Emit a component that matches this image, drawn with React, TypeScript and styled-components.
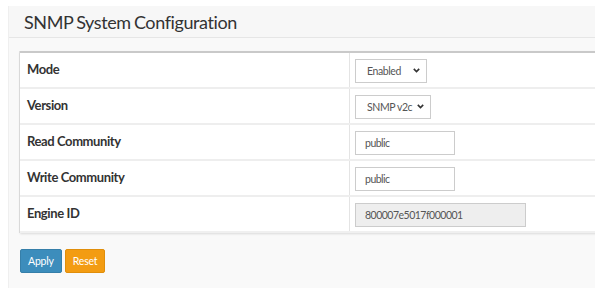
import React from "react";
import styled, { createGlobalStyle } from "styled-components";

const GlobalStyle = createGlobalStyle`
  html, body {
    margin: 0;
    padding: 0;
    background: #ffffff;
    font-family: "Lato", "Liberation Sans", sans-serif;
  }
`;

type Row = {
  label: string;
  kind: "select" | "text" | "readonly";
  value: string;
  options?: string[];
  width: number;
};

const rows: Row[] = [
  { label: "Mode", kind: "select", value: "Enabled", options: ["Enabled", "Disabled"], width: 72 },
  { label: "Version", kind: "select", value: "SNMP v2c", options: ["SNMP v1", "SNMP v2c", "SNMP v3"], width: 76 },
  { label: "Read Community", kind: "text", value: "public", width: 100 },
  { label: "Write Community", kind: "text", value: "public", width: 100 },
  { label: "Engine ID", kind: "readonly", value: "800007e5017f000001", width: 171 },
];

const Chevron = () => (
  <svg width="7" height="5" viewBox="0 0 7 5">
    <path d="M0.8 0.9 L3.5 3.6 L6.2 0.9" fill="none" stroke="#333" strokeWidth="1.6" />
  </svg>
);

const App = () => {
  return (
    <>
      <GlobalStyle />
      <Panel>
        <Header>
          <Title>SNMP System Configuration</Title>
        </Header>
        <Body>
          <ConfigTable>
            <tbody>
              {rows.map((row) => (
                <tr key={row.label}>
                  <LabelCell>{row.label}</LabelCell>
                  <ValueCell>
                    {row.kind === "select" ? (
                      <SelectWrap $width={row.width}>
                        <Select defaultValue={row.value}>
                          {row.options!.map((o) => (
                            <option key={o}>{o}</option>
                          ))}
                        </Select>
                        <Arrow>
                          <Chevron />
                        </Arrow>
                      </SelectWrap>
                    ) : (
                      <TextInput
                        $width={row.width}
                        $readonly={row.kind === "readonly"}
                        defaultValue={row.value}
                        readOnly={row.kind === "readonly"}
                      />
                    )}
                  </ValueCell>
                </tr>
              ))}
            </tbody>
          </ConfigTable>
          <Actions>
            <Button $variant="primary">Apply</Button>
            <Button $variant="warning">Reset</Button>
          </Actions>
        </Body>
      </Panel>
    </>
  );
};

export default App;

const Panel = styled.div`
  margin: 6px 0 0 8px;
  width: 587px;
  height: 282px;
  background: #f9f9f9;
  border-left: 1px solid #efefef;
  box-sizing: border-box;
  overflow: hidden;
`;

const Header = styled.div`
  height: 31px;
  padding-left: 15px;
  background: #f7f7f7;
  border-bottom: 1px solid #e6e6e6;
  display: flex;
  align-items: center;
`;

const Title = styled.h3`
  margin: 0;
  font-size: 18px;
  font-weight: 400;
  letter-spacing: -0.4px;
  word-spacing: -1px;
  color: #333;
`;

const Body = styled.div`
  padding: 13px 0 0 11px;
`;

const ConfigTable = styled.table`
  width: 580px;
  border-collapse: collapse;
  border-spacing: 0;
  background: #ffffff;
  border-top: 2px solid #c9c9c9;
  border-bottom: 2px solid #f0f0f0;
  box-shadow: 0 1px 2px rgba(0, 0, 0, 0.12), -1px 0 0 #e2e2e2;

  tr + tr td {
    border-top: 2px solid #eeeeee;
  }
`;

const LabelCell = styled.td`
  width: 322px;
  padding: 7px 0 9px 7px;
  line-height: 18px;
  vertical-align: top;
  font-size: 13px;
  font-weight: 700;
  letter-spacing: -0.4px;
  color: #333;
  border-right: 1px solid #e4e4e4;
`;

const ValueCell = styled.td`
  padding: 6px 0 4px 5px;
  vertical-align: top;
`;

const SelectWrap = styled.div<{ $width: number }>`
  position: relative;
  width: ${(p) => p.$width}px;
  height: 24px;
`;

const Select = styled.select`
  appearance: none;
  display: block;
  width: 100%;
  height: 24px;
  margin: 0;
  padding: 0 0 0 11px;
  border: 1px solid #cccccc;
  border-radius: 0;
  background: #ffffff;
  font-family: inherit;
  font-size: 10.5px;
  letter-spacing: -0.4px;
  color: #555;
  outline: none;
`;

const Arrow = styled.span`
  position: absolute;
  right: 7px;
  top: 9px;
  display: flex;
  pointer-events: none;
`;

const TextInput = styled.input<{ $width: number; $readonly: boolean }>`
  display: block;
  width: ${(p) => p.$width}px;
  height: 24px;
  margin: 0;
  padding: 0 0 0 9px;
  box-sizing: border-box;
  border: 1px solid #cccccc;
  border-radius: 0;
  background: ${(p) => (p.$readonly ? "#eeeeee" : "#ffffff")};
  font-family: inherit;
  font-size: 10.5px;
  letter-spacing: -0.5px;
  color: #555;
  outline: none;
`;

const Actions = styled.div`
  display: flex;
  gap: 3px;
  margin-top: 16px;
`;

const Button = styled.button<{ $variant: "primary" | "warning" }>`
  height: 24px;
  padding: 0 7px;
  border-radius: 2px;
  border: 1px solid ${(p) => (p.$variant === "primary" ? "#367fa9" : "#e08e0b")};
  background: ${(p) => (p.$variant === "primary" ? "#3c8dbc" : "#f39c12")};
  color: #ffffff;
  font-family: inherit;
  font-size: 10.5px;
  letter-spacing: -0.2px;
  cursor: pointer;
`;
